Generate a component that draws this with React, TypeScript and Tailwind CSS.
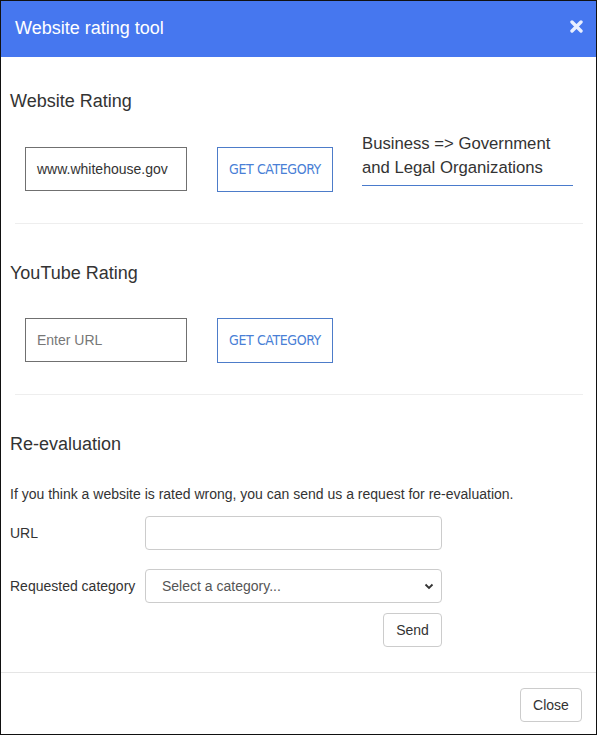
import React from "react";

const F = { fontFamily: '"Liberation Sans", Arial, sans-serif' };

function CatButton() {
  return (
    <button
      className="h-[45px] w-[116px] shrink-0 border border-[#4d7cc9] bg-white text-[14px] text-[#4a7fd6] tracking-[-0.4px]"
      style={{ fontFamily: '"DejaVu Sans Condensed", "Liberation Sans Narrow", sans-serif' }}
    >
      GET CATEGORY
    </button>
  );
}

export default function App() {
  return (
    <div
      className="w-[597px] h-[735px] border border-[#111] bg-white flex flex-col text-[#333]"
      style={F}
    >
      <div className="h-[56px] bg-[#4677ef] flex items-center justify-between pl-[14px] pr-[13px] shrink-0">
        <span className="text-[18px] text-white leading-none pb-[2px]">Website rating tool</span>
        <svg width="13" height="13" viewBox="0 0 13 13" className="mb-[5px]">
          <path d="M2 2 L11 11 M11 2 L2 11" stroke="#e9efff" strokeWidth="3.4" strokeLinecap="round" />
        </svg>
      </div>

      <div className="flex-1 px-[9px] flex flex-col">
        <h2 className="mt-[34px] text-[18px] leading-[20px]">Website Rating</h2>
        <div className="mt-[36px] flex items-start pl-[15px]">
          <div className="h-[44px] w-[162px] shrink-0 border border-[#707070] flex items-center px-[11px] text-[14px] text-[#333]">
            www.whitehouse.gov
          </div>
          <div className="ml-[30px]">
            <CatButton />
          </div>
          <div className="ml-[29px] -mt-[15px] w-[211px] border-b border-[#4a7bcc] pb-[5px] text-[16.7px] leading-[24px] text-[#333]">
            Business =&gt; Government and Legal Organizations
          </div>
        </div>
        <div className="mt-[31px] ml-[5px] mr-[4px] h-px bg-[#eeeeee]" />

        <h2 className="mt-[39px] text-[18px] leading-[20px]">YouTube Rating</h2>
        <div className="mt-[35px] flex items-start pl-[15px]">
          <div className="h-[44px] w-[162px] shrink-0 border border-[#707070] flex items-center px-[11px] text-[14px] text-[#777]">
            Enter URL
          </div>
          <div className="ml-[30px]">
            <CatButton />
          </div>
        </div>
        <div className="mt-[31px] ml-[5px] mr-[4px] h-px bg-[#eeeeee]" />

        <h2 className="mt-[39px] text-[18px] leading-[20px]">Re-evaluation</h2>
        <p className="mt-[31px] text-[14px] leading-[18px]">
          If you think a website is rated wrong, you can send us a request for re-evaluation.
        </p>
        <div className="mt-[13px] flex items-center">
          <label className="w-[135px] shrink-0 text-[14px]">URL</label>
          <div className="h-[34px] w-[297px] rounded-[4px] border border-[#cccccc]" />
        </div>
        <div className="mt-[19px] flex items-center">
          <label className="w-[135px] shrink-0 text-[14px]">Requested category</label>
          <div className="relative h-[34px] w-[297px] rounded-[4px] border border-[#cccccc] flex items-center pl-[16px] text-[14px] text-[#555]">
            Select a category...
            <svg width="10" height="7" viewBox="0 0 10 7" className="absolute right-[7px] top-[13px]">
              <path d="M1.5 1.5 L5 5 L8.5 1.5" stroke="#333" strokeWidth="1.8" fill="none" />
            </svg>
          </div>
        </div>
        <div className="mt-[10px] flex">
          <div className="w-[432px] flex justify-end">
            <button className="h-[34px] w-[59px] rounded-[4px] border border-[#cccccc] bg-white text-[14px] text-[#333]">
              Send
            </button>
          </div>
        </div>
        <div className="h-[25px]" />
      </div>

      <div className="border-t border-[#e5e5e5] pt-[15px] pb-[12px] pr-[14px] flex justify-end shrink-0">
        <button className="h-[34px] w-[62px] rounded-[4px] border border-[#cccccc] bg-white text-[14px] text-[#333]">
          Close
        </button>
      </div>
    </div>
  );
}
